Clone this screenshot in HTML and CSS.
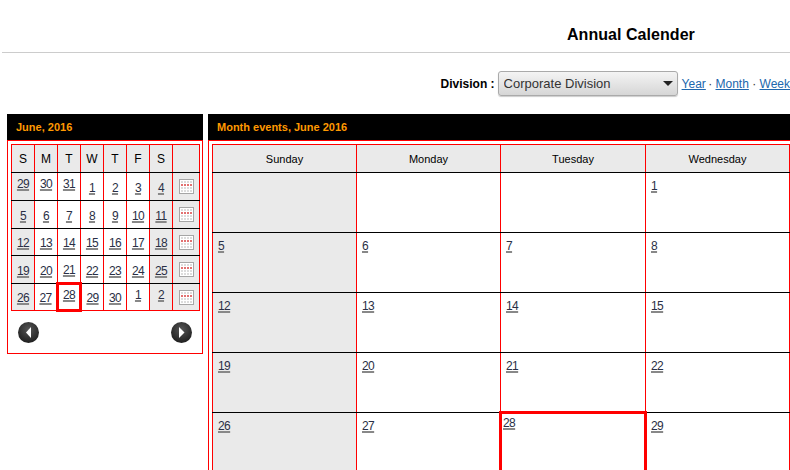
FILE: index.html
```html
<!DOCTYPE html>
<html lang="en">
<head>
<meta charset="utf-8">
<title>Annual Calender</title>
<link rel="stylesheet" href="styles.css">
</head>
<body>
<svg class="defs" width="0" height="0" aria-hidden="true">
  <defs>
    <pattern id="dots" x="2" y="2" width="3" height="3" patternUnits="userSpaceOnUse">
      <rect width="2" height="2" fill="#dcdcdc"/>
    </pattern>
    <pattern id="reddots" x="2" y="5" width="3" height="3" patternUnits="userSpaceOnUse">
      <rect width="2" height="2" fill="#e27272"/>
    </pattern>
  </defs>
  <symbol id="cal" viewBox="0 0 15 15">
    <rect x="0.5" y="0.5" width="14" height="14" fill="#fff" stroke="#a6a6a6"/>
    <rect x="2" y="2" width="11" height="11" fill="url(#dots)"/>
    <rect x="2" y="5" width="11" height="2" fill="url(#reddots)"/>
  </symbol>
</svg>
<header class="title-row"><h1 class="title">Annual Calender</h1></header>
<div class="toolbar">
  <label class="division-label" for="division">Division :</label>
  <span class="select-wrap">
    <select id="division" class="division"><option>Corporate Division</option></select>
    <span class="caret"></span>
  </span>
  <nav class="views"><a class="year" href="#">Year</a> · <a href="#">Month</a> · <a href="#">Week</a></nav>
</div>
<main class="columns">
  <section class="panel mini">
    <h2 class="panel-head">June, 2016</h2>
    <div class="panel-body">
      <table class="mini-cal">
        <colgroup><col class="d"><col class="d"><col class="d"><col class="d"><col class="d"><col class="d"><col class="d"><col class="w"></colgroup>
        <thead><tr><th>S</th><th>M</th><th>T</th><th>W</th><th>T</th><th>F</th><th>S</th><th></th></tr></thead>
        <tbody>
          <tr><td class="we hi"><a href="#">29</a></td><td class="hi"><a href="#">30</a></td><td class="hi"><a href="#">31</a></td><td><a href="#">1</a></td><td><a href="#">2</a></td><td><a href="#">3</a></td><td class="we"><a href="#">4</a></td><td class="we wk"><svg class="cal-icon"><use href="#cal"/></svg></td></tr>
          <tr><td class="we"><a href="#">5</a></td><td><a href="#">6</a></td><td><a href="#">7</a></td><td><a href="#">8</a></td><td><a href="#">9</a></td><td><a href="#">10</a></td><td class="we"><a href="#">11</a></td><td class="we wk"><svg class="cal-icon"><use href="#cal"/></svg></td></tr>
          <tr class="short"><td class="we"><a href="#">12</a></td><td><a href="#">13</a></td><td><a href="#">14</a></td><td><a href="#">15</a></td><td><a href="#">16</a></td><td><a href="#">17</a></td><td class="we"><a href="#">18</a></td><td class="we wk"><svg class="cal-icon"><use href="#cal"/></svg></td></tr>
          <tr><td class="we"><a href="#">19</a></td><td><a href="#">20</a></td><td><a href="#">21</a></td><td><a href="#">22</a></td><td><a href="#">23</a></td><td><a href="#">24</a></td><td class="we"><a href="#">25</a></td><td class="we wk"><svg class="cal-icon"><use href="#cal"/></svg></td></tr>
          <tr class="end"><td class="we"><a href="#">26</a></td><td><a href="#">27</a></td><td class="today hi"><a href="#">28</a></td><td><a href="#">29</a></td><td><a href="#">30</a></td><td class="hi"><a href="#">1</a></td><td class="we hi"><a href="#">2</a></td><td class="we wk"><svg class="cal-icon"><use href="#cal"/></svg></td></tr>
        </tbody>
      </table>
      <div class="pager">
        <a class="round" href="#" aria-label="Previous month"><svg viewBox="0 0 21 21" width="21" height="21"><path class="tri" d="M13 5v11L8 10.5z"/></svg></a>
        <a class="round" href="#" aria-label="Next month"><svg viewBox="0 0 21 21" width="21" height="21"><path class="tri" d="M8 5v11l5.5-5.5z"/></svg></a>
      </div>
    </div>
  </section>
  <section class="panel month">
    <h2 class="panel-head">Month events, June 2016</h2>
    <div class="panel-body">
      <table class="month-cal">
        <colgroup><col class="c"><col class="c"><col class="c wide"><col class="c"></colgroup>
        <thead><tr><th>Sunday</th><th>Monday</th><th>Tuesday</th><th>Wednesday</th></tr></thead>
        <tbody>
          <tr><td class="we"></td><td></td><td></td><td><a href="#">1</a></td></tr>
          <tr><td class="we"><a href="#">5</a></td><td><a href="#">6</a></td><td><a href="#">7</a></td><td><a href="#">8</a></td></tr>
          <tr><td class="we"><a href="#">12</a></td><td><a href="#">13</a></td><td><a href="#">14</a></td><td><a href="#">15</a></td></tr>
          <tr><td class="we"><a href="#">19</a></td><td><a href="#">20</a></td><td><a href="#">21</a></td><td><a href="#">22</a></td></tr>
          <tr class="last"><td class="we"><a href="#">26</a></td><td><a href="#">27</a></td><td class="today"><a href="#">28</a></td><td class="after-today"><a href="#">29</a></td></tr>
        </tbody>
      </table>
    </div>
  </section>
</main>
</body>
</html>
```
FILE: styles.css
```css
html, body { margin: 0; padding: 0; }
body {
  width: 790px;
  height: 470px;
  overflow: hidden;
  background: #fff;
  color: #000;
  font-family: "Liberation Sans", Arial, sans-serif;
  font-size: 12px;
}
.defs { position: absolute; }

.title-row {
  margin-left: 2px;
  height: 52px;
  border-bottom: 1px solid #ccc;
  display: flex;
  align-items: flex-start;
  padding-left: 565px;
}
.title { margin: 26px 0 0; font-size: 16px; line-height: 18px; font-weight: bold; letter-spacing: .05px; }

.toolbar {
  display: flex;
  justify-content: flex-end;
  align-items: center;
  height: 25px;
  margin-top: 18px;
  white-space: nowrap;
}
.division-label { font-weight: bold; margin-right: 3px; }
.select-wrap { position: relative; display: block; width: 180px; height: 25px; margin-right: 4px; }
.division {
  appearance: none;
  -webkit-appearance: none;
  display: block;
  width: 100%;
  height: 100%;
  margin: 0;
  padding: 0 24px 0 5px;
  font: 13px "Liberation Sans", Arial, sans-serif;
  color: #333;
  border: 1px solid #aaa;
  border-radius: 3px;
  background: linear-gradient(#f4f4f4, #d6d6d6);
  box-shadow: 0 1px 1px rgba(0,0,0,.2);
}
.caret {
  position: absolute;
  top: 10px;
  right: 5px;
  border-left: 5px solid transparent;
  border-right: 5px solid transparent;
  border-top: 5px solid #222;
}
.views { color: #333; }
.views a { color: #2067ad; }
.views .year { margin-right: -1px; }

.columns { display: flex; gap: 5px; margin-top: 18px; padding-left: 7px; }
.panel { flex: none; }
.mini { width: 196px; }
.month { width: 582px; }
.panel-head {
  margin: 0;
  height: 26px;
  line-height: 27px;
  background: #000;
  color: #f90;
  font-size: 11px;
  font-weight: bold;
  padding-left: 9px;
}
.panel-body {
  border: 1px solid #f00;
  padding: 3px;
}
.mini .panel-body { height: 206px; }
.month .panel-body { border-right: 0; border-bottom: 0; padding-right: 0; padding-bottom: 0; }

table { border-collapse: collapse; table-layout: fixed; }
th, td { border: 1px solid #f00; border-top-color: #000; border-bottom-color: #000; padding: 0; }
th { background: #eaeaea; font-weight: normal; border-top-color: #f00; }
.we { background: #eaeaea; }
td a {
  color: #2a2f45;
  letter-spacing: -.6px;
  text-decoration-color: #888;
  text-decoration-thickness: 2px;
  text-underline-offset: 1px;
}

.mini-cal { width: 188px; }
.mini-cal col.d { width: 23px; }
.mini-cal col.w { width: 27px; }
.mini-cal th { height: 27px; }
.mini-cal td { height: 28px; text-align: center; padding-top: 2px; box-sizing: border-box; }
.mini-cal .short td, .mini-cal .end td { height: 27px; }
.mini-cal td.hi { vertical-align: top; padding-top: 4px; }
.mini-cal td.today { padding-top: 3px; }
.mini-cal td.wk { padding-top: 0; }
.mini-cal .end td { border-bottom-color: #f00; }
.cal-icon { display: block; width: 15px; height: 15px; margin: 0 auto; }
.today.today { border: 3px solid #f00; }

.pager { display: flex; justify-content: space-between; padding: 10px 7px 0; }
.round {
  display: block;
  width: 21px;
  height: 21px;
  border-radius: 50%;
  background: radial-gradient(circle at 50% 35%, #555, #222 75%);
}
.round svg { display: block; }
.tri { fill: #fff; }

.month-cal { width: 578px; }
.month-cal col.c { width: 144px; }
.month-cal col.wide { width: 145px; }
.month-cal th { height: 27px; font-size: 11px; }
.month-cal td { height: 60px; vertical-align: top; padding: 6px 5px; box-sizing: border-box; }
.month-cal .last td { height: 90px; }
.month-cal td.today { padding: 2px 1px; }
.month-cal td.after-today { padding-left: 4px; }
```
